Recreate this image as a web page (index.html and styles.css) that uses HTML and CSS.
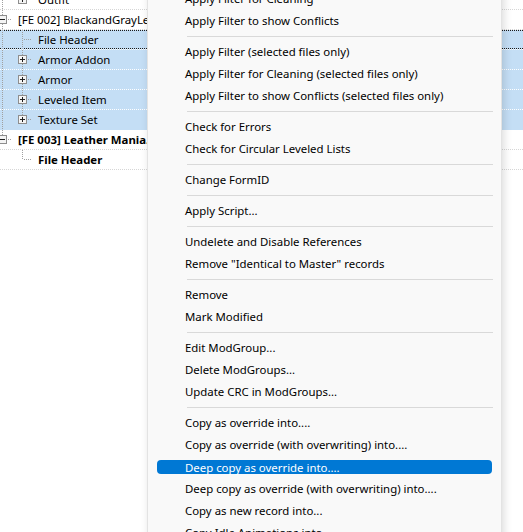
FILE: index.html
```html
<!DOCTYPE html>
<html>
<head>
<meta charset="utf-8">
<link rel="stylesheet" href="styles.css">
</head>
<body>
<div class="tree">
  <div class="row">
    <span class="cell pipe"></span>
    <span class="cell ell"><span class="box plus"></span></span>
    <span class="label">Outfit</span>
  </div>
  <div class="row">
    <span class="cell tee"><span class="box minus"></span></span>
    <span class="label">[FE 002] BlackandGrayLeather.esp</span>
  </div>
  <div class="row sel focus">
    <span class="cell pipe"></span>
    <span class="cell tee"></span>
    <span class="label">File Header</span>
  </div>
  <div class="row sel">
    <span class="cell pipe"></span>
    <span class="cell tee"><span class="box plus"></span></span>
    <span class="label">Armor Addon</span>
  </div>
  <div class="row sel">
    <span class="cell pipe"></span>
    <span class="cell tee"><span class="box plus"></span></span>
    <span class="label">Armor</span>
  </div>
  <div class="row sel">
    <span class="cell pipe"></span>
    <span class="cell tee"><span class="box plus"></span></span>
    <span class="label">Leveled Item</span>
  </div>
  <div class="row sel last-sel">
    <span class="cell pipe"></span>
    <span class="cell ell"><span class="box plus"></span></span>
    <span class="label">Texture Set</span>
  </div>
  <div class="row bold">
    <span class="cell ell"><span class="box minus"></span></span>
    <span class="label">[FE 003] Leather Mania.esp</span>
  </div>
  <div class="row bold">
    <span class="cell"></span>
    <span class="cell ell"></span>
    <span class="label">File Header</span>
  </div>
</div>

<div class="menu">
  <div class="item">Apply Filter for Cleaning</div>
  <div class="item">Apply Filter to show Conflicts</div>
  <div class="sep"></div>
  <div class="item">Apply Filter (selected files only)</div>
  <div class="item">Apply Filter for Cleaning (selected files only)</div>
  <div class="item">Apply Filter to show Conflicts (selected files only)</div>
  <div class="sep"></div>
  <div class="item">Check for Errors</div>
  <div class="item">Check for Circular Leveled Lists</div>
  <div class="sep"></div>
  <div class="item">Change FormID</div>
  <div class="sep"></div>
  <div class="item">Apply Script...</div>
  <div class="sep"></div>
  <div class="item">Undelete and Disable References</div>
  <div class="item">Remove "Identical to Master" records</div>
  <div class="sep"></div>
  <div class="item">Remove</div>
  <div class="item">Mark Modified</div>
  <div class="sep"></div>
  <div class="item">Edit ModGroup...</div>
  <div class="item">Delete ModGroups...</div>
  <div class="item">Update CRC in ModGroups...</div>
  <div class="sep"></div>
  <div class="item">Copy as override into....</div>
  <div class="item">Copy as override (with overwriting) into....</div>
  <div class="item hl"><span class="hl-bar">Deep copy as override into....</span></div>
  <div class="item">Deep copy as override (with overwriting) into....</div>
  <div class="item">Copy as new record into...</div>
  <div class="item">Copy Idle Animations into...</div>
</div>
</body>
</html>
```

FILE: styles.css
```css
html, body {
  margin: 0;
  padding: 0;
  background: #ffffff;
  overflow: hidden;
  height: 532px;
}
body {
  font-family: "Noto Sans", "Open Sans", sans-serif;
  font-size: 11.4px;
  color: #000;
  position: relative;
}
.tree {
  margin-top: -10px;
}
.row {
  display: flex;
  align-items: center;
  height: 19px;
  border-bottom: 1px dotted #d6d6d6;
  white-space: nowrap;
}
.row > .cell:first-child {
  margin-left: -8px;
}
.row.sel {
  background-color: #c4def5;
  border-bottom-color: #ffffff;
}
.row.last-sel {
  border-bottom: 1px solid #c4def5;
}
.row.focus {
  background-image:
    repeating-linear-gradient(to right, #1a1a1a 0 1px, transparent 1px 2px),
    repeating-linear-gradient(to right, #1a1a1a 0 1px, transparent 1px 2px);
  background-size: 100% 1px, 100% 1px;
  background-position: 0 0, 0 18px;
  background-repeat: no-repeat;
}
.row.bold {
  font-weight: bold;
}
.cell {
  flex: none;
  width: 20px;
  height: 19px;
  box-sizing: border-box;
  padding: 5px 0 0 6px;
  background-repeat: no-repeat;
}
.pipe {
  background-image: repeating-linear-gradient(to bottom, #a0a0a0 0 1px, transparent 1px 2px);
  background-size: 1px 19px;
  background-position: 10px 0;
}
.tee {
  background-image:
    repeating-linear-gradient(to bottom, #a0a0a0 0 1px, transparent 1px 2px),
    repeating-linear-gradient(to right, #a0a0a0 0 1px, transparent 1px 2px);
  background-size: 1px 19px, 10px 1px;
  background-position: 10px 0, 12px 9px;
}
.ell {
  background-image:
    repeating-linear-gradient(to bottom, #a0a0a0 0 1px, transparent 1px 2px),
    repeating-linear-gradient(to right, #a0a0a0 0 1px, transparent 1px 2px);
  background-size: 1px 10px, 10px 1px;
  background-position: 10px 0, 12px 9px;
}
.box {
  display: block;
  width: 9px;
  height: 9px;
  box-sizing: border-box;
  border: 1px solid #8e8e8e;
  background-color: #f4f4f4;
  background-repeat: no-repeat;
}
.box.minus {
  background-image: linear-gradient(#202020, #202020);
  background-size: 5px 1px;
  background-position: 1px 3px;
}
.box.plus {
  background-image: linear-gradient(#202020, #202020), linear-gradient(#202020, #202020);
  background-size: 5px 1px, 1px 5px;
  background-position: 1px 3px, 3px 1px;
}
.label {
  margin-left: 6px;
}

.menu {
  position: absolute;
  left: 147px;
  top: -13px;
  width: 355px;
  box-sizing: border-box;
  background: #f9f9f9;
  border: 1px solid #e3e3e3;
  border-top: none;
  box-shadow: 2px 3px 8px rgba(0, 0, 0, 0.14);
}
.item {
  height: 21px;
  padding-top: 1px;
  line-height: 22px;
  padding-left: 37px;
  white-space: nowrap;
  color: #000;
}
.item.hl {
  padding: 5px 9px 3px 9px;
  height: 14px;
  line-height: 14px;
}
.hl-bar {
  display: block;
  height: 14px;
  padding-top: 1px;
  box-sizing: border-box;
  background: #0078d4;
  color: #fff;
  border-radius: 4px;
  padding-left: 28px;
  line-height: 13px;
}
.sep {
  height: 1px;
  margin: 5px 8px 3px 39px;
  background: #d9d9d9;
}
```
